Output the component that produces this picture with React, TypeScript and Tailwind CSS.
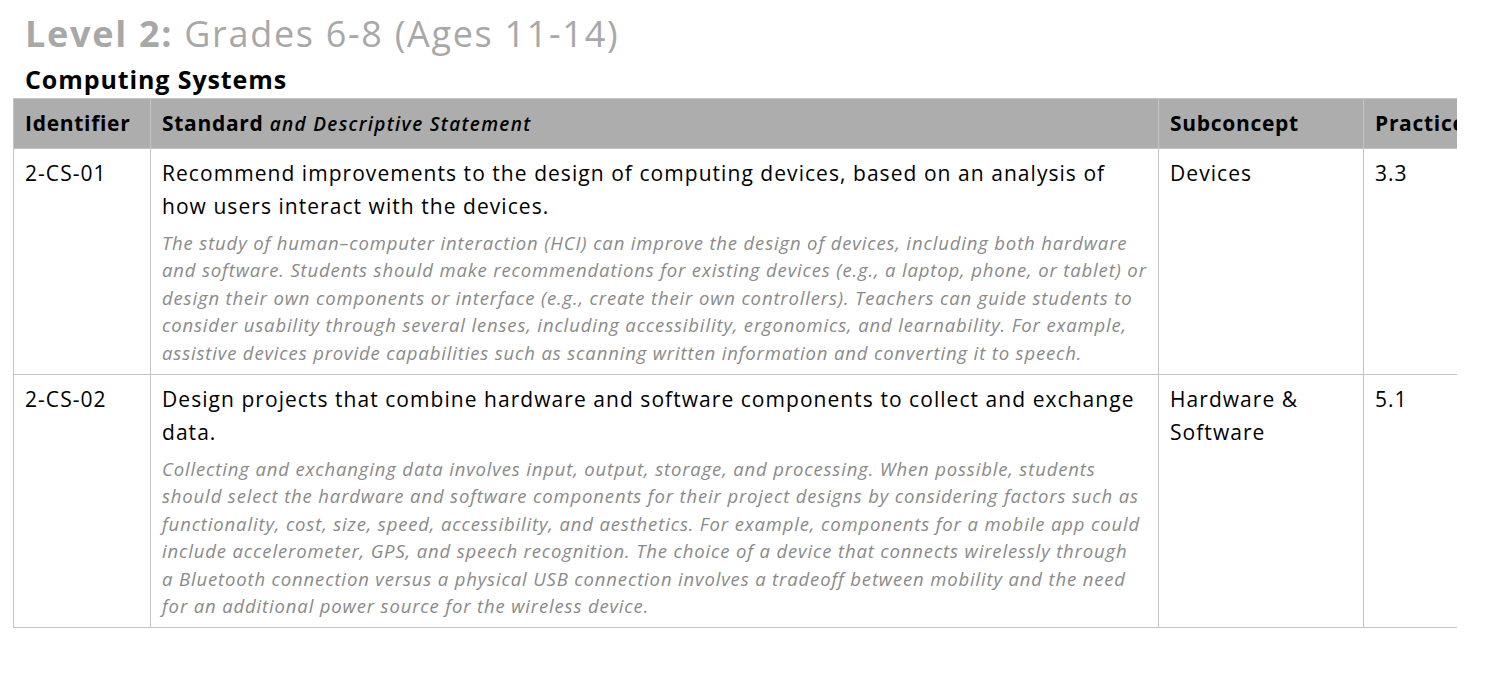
const font = { fontFamily: "'Open Sans', Lato, sans-serif" };

type Row = {
  id: string;
  statement: string[];
  detail: string[];
  subconcept: string[];
  practice: string;
};

const rows: Row[] = [
  {
    id: "2-CS-01",
    statement: [
      "Recommend improvements to the design of computing devices, based on an analysis of",
      "how users interact with the devices.",
    ],
    detail: [
      "The study of human–computer interaction (HCI) can improve the design of devices, including both hardware",
      "and software. Students should make recommendations for existing devices (e.g., a laptop, phone, or tablet) or",
      "design their own components or interface (e.g., create their own controllers). Teachers can guide students to",
      "consider usability through several lenses, including accessibility, ergonomics, and learnability. For example,",
      "assistive devices provide capabilities such as scanning written information and converting it to speech.",
    ],
    subconcept: ["Devices"],
    practice: "3.3",
  },
  {
    id: "2-CS-02",
    statement: [
      "Design projects that combine hardware and software components to collect and exchange",
      "data.",
    ],
    detail: [
      "Collecting and exchanging data involves input, output, storage, and processing. When possible, students",
      "should select the hardware and software components for their project designs by considering factors such as",
      "functionality, cost, size, speed, accessibility, and aesthetics. For example, components for a mobile app could",
      "include accelerometer, GPS, and speech recognition. The choice of a device that connects wirelessly through",
      "a Bluetooth connection versus a physical USB connection involves a tradeoff between mobility and the need",
      "for an additional power source for the wireless device.",
    ],
    subconcept: ["Hardware &", "Software"],
    practice: "5.1",
  },
];

function Lines({ lines }: { lines: string[] }) {
  return (
    <>
      {lines.map((l, i) => (
        <div key={i} className="whitespace-nowrap">
          {l}
        </div>
      ))}
    </>
  );
}

const cell = "border border-[#c4c4c4] px-[11px]";

export default function App() {
  return (
    <div className="bg-white w-[1494px] h-[673px] overflow-hidden" style={font}>
      <div className="pl-[25px] pt-[10px]">
        <h1 className="text-[36px] leading-[48px] text-[#a8a8a8] whitespace-nowrap tracking-[1.7px]">
          <span className="font-bold">Level 2:</span> Grades 6-8 (Ages 11-14)
        </h1>
        <h2 className="text-[25px] leading-[34px] font-bold text-black mt-[4px] tracking-[0.9px]">
          Computing Systems
        </h2>
      </div>
      <div className="ml-[13px] w-[1444px] overflow-hidden mt-[2px]">
        <table className="border-collapse table-fixed w-[1600px] text-black">
          <colgroup>
            <col className="w-[137px]" />
            <col className="w-[1008px]" />
            <col className="w-[205px]" />
            <col className="w-[250px]" />
          </colgroup>
          <thead>
            <tr className="bg-[#adadad] h-[50px] text-left text-[21px] font-bold tracking-[0.7px]">
              <th className={cell}>Identifier</th>
              <th className={`${cell} whitespace-nowrap`}>
                Standard{" "}
                <span className="italic font-semibold text-[19px] tracking-[1.3px]">and Descriptive Statement</span>
              </th>
              <th className={cell}>Subconcept</th>
              <th className={`${cell} whitespace-nowrap`}>Practice</th>
            </tr>
          </thead>
          <tbody className="tracking-[1.05px]">
            {rows.map((r) => (
              <tr key={r.id} className="align-top">
                <td className={`${cell} pt-[8px] text-[21px] leading-[33px]`}>{r.id}</td>
                <td className={`${cell} pt-[8px] pb-[8px]`}>
                  <div className="text-[21px] leading-[33px]">
                    <Lines lines={r.statement} />
                  </div>
                  <div className="mt-[6px] italic text-[18.5px] leading-[27.4px] text-[#8a8a8a] tracking-[0.85px]">
                    <Lines lines={r.detail} />
                  </div>
                </td>
                <td className={`${cell} pt-[8px] text-[21px] leading-[33px]`}>
                  <Lines lines={r.subconcept} />
                </td>
                <td className={`${cell} pt-[8px] text-[21px] leading-[33px]`}>{r.practice}</td>
              </tr>
            ))}
          </tbody>
        </table>
      </div>
    </div>
  );
}
